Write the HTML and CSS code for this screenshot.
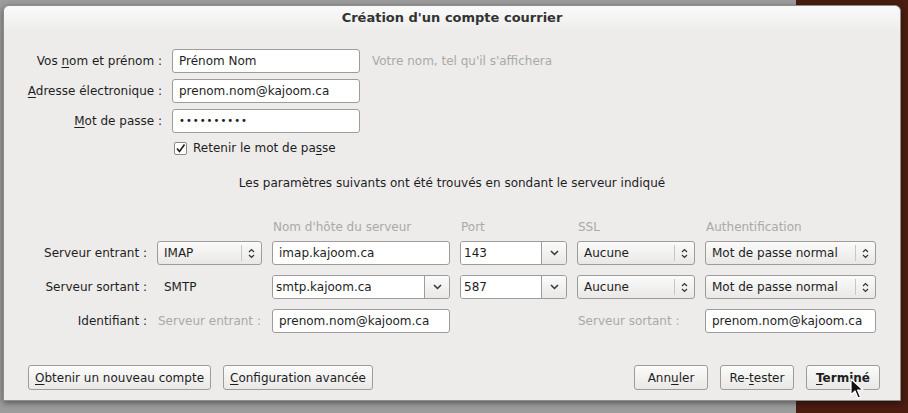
FILE: index.html
```html
<!DOCTYPE html>
<html lang="fr">
<head>
    <meta charset="UTF-8">
    <title>Création d'un compte courrier</title>
    <link rel="stylesheet" href="styles.css">
</head>
<body>
    <div class="dialog">
        <div class="titlebar">Création d'un compte courrier</div>

        <div class="identity">
            <label class="lbl">Vos <u>n</u>om et prénom :</label>
            <div class="entry">Prénom Nom</div>
            <span class="hint">Votre nom, tel qu'il s'affichera</span>

            <label class="lbl"><u>A</u>dresse électronique :</label>
            <div class="entry">prenom.nom@kajoom.ca</div>
            <span></span>

            <label class="lbl"><u>M</u>ot de passe :</label>
            <div class="entry dots">••••••••••</div>
            <span></span>

            <span></span>
            <label class="check">
                <span class="box">
                    <svg width="11" height="11" viewBox="0 0 11 11"><path d="M2 5.5 L4.5 8.5 L9.5 1.5" fill="none" stroke="#1a1a1a" stroke-width="1.6"/></svg>
                </span>
                <span>Retenir le mot de pa<u>s</u>se</span>
            </label>
            <span></span>
        </div>

        <p class="info">Les paramètres suivants ont été trouvés en sondant le serveur indiqué</p>

        <div class="servers">
            <span></span>
            <span></span>
            <span class="colhead">Nom d'hôte du serveur</span>
            <span class="colhead">Port</span>
            <span class="colhead">SSL</span>
            <span class="colhead">Authentification</span>

            <label class="lbl">Serveur entrant :</label>
            <div class="select">IMAP<span class="spin"></span></div>
            <div class="entry">imap.kajoom.ca</div>
            <div class="combo"><span>143</span><span class="drop"></span></div>
            <div class="select">Aucune<span class="spin"></span></div>
            <div class="select">Mot de passe normal<span class="spin"></span></div>

            <label class="lbl">Serveur sortant :</label>
            <span class="plain">SMTP</span>
            <div class="combo"><span>smtp.kajoom.ca</span><span class="drop"></span></div>
            <div class="combo"><span>587</span><span class="drop"></span></div>
            <div class="select">Aucune<span class="spin"></span></div>
            <div class="select">Mot de passe normal<span class="spin"></span></div>

            <label class="lbl">Identifiant :</label>
            <span class="sub">Serveur entrant :</span>
            <div class="entry">prenom.nom@kajoom.ca</div>
            <span></span>
            <span class="sub">Serveur sortant :</span>
            <div class="entry">prenom.nom@kajoom.ca</div>
        </div>

        <div class="actions">
            <button class="btn"><u>O</u>btenir un nouveau compte</button>
            <button class="btn"><u>C</u>onfiguration avancée</button>
            <span class="spacer"></span>
            <button class="btn wide">Ann<u>u</u>ler</button>
            <button class="btn wide">Re-<u>t</u>ester</button>
            <button class="btn wide default"><u>T</u>erminé</button>
        </div>

        <svg class="cursor" width="14" height="22" viewBox="0 0 14 22">
            <path d="M1 1 L1 17 L5 13 L8 20 L10.5 19 L7.5 12 L13 12 Z" fill="#111" stroke="#fff" stroke-width="1.2" stroke-linejoin="round"/>
        </svg>
    </div>
</body>
</html>
```

FILE: styles.css
```css
* {
    box-sizing: border-box;
}

body {
    margin: 0;
    height: 413px;
    overflow: hidden;
    font-family: 'DejaVu Sans', sans-serif;
    font-size: 12px;
    color: #1e1e1e;
    background: linear-gradient(to right, #9c9c9c 0, #9c9c9c 796px, #4a1d10 796px);
    padding: 5px 0 0 3px;
}

u {
    text-decoration: underline;
    text-underline-offset: 2px;
}

/* Dialog window */
.dialog {
    position: relative;
    width: 898px;
    height: 396px;
    background: #edeceb;
    border: 1px solid #8d8d8b;
    border-radius: 6px 6px 0 0;
    box-shadow: 0 2px 6px rgba(0, 0, 0, 0.45);
}

.titlebar {
    height: 26px;
    line-height: 24px;
    text-align: center;
    font-weight: bold;
    font-size: 13px;
    color: #333;
    border-radius: 6px 6px 0 0;
    background: linear-gradient(#fafafa, #edeceb);
}

/* Name / address / password */
.identity {
    display: grid;
    grid-template-columns: 158px 188px 1fr;
    column-gap: 10px;
    row-gap: 6px;
    align-items: center;
    margin-top: 17px;
}

.lbl {
    text-align: right;
    white-space: nowrap;
}

.hint {
    color: #a9a9a7;
    padding-left: 2px;
}

.entry {
    height: 24px;
    line-height: 22px;
    padding: 0 6px;
    background: #fff;
    border: 1px solid #9d9c9a;
    border-radius: 3px;
    white-space: nowrap;
    overflow: hidden;
}

.dots {
    letter-spacing: 1px;
    font-size: 10px;
}

.check {
    display: flex;
    align-items: center;
    gap: 6px;
    margin-top: 2px;
    padding-left: 2px;
}

.box {
    display: flex;
    align-items: center;
    justify-content: center;
    width: 13px;
    height: 13px;
    background: #fff;
    border: 1px solid #8a8a88;
    border-radius: 2px;
}

.info {
    margin: 21px 0 0;
    text-align: center;
}

/* Server settings table */
.servers {
    display: grid;
    grid-template-columns: 143px 105px 178px 107px 118px 171px;
    column-gap: 10px;
    row-gap: 10px;
    align-items: center;
    margin-top: 30px;
}

.colhead {
    color: #a9a9a7;
    padding-left: 1px;
    margin-bottom: -3px;
}

.plain {
    padding-left: 7px;
}

.sub {
    color: #a9a9a7;
    padding-left: 1px;
    white-space: nowrap;
}

.select {
    position: relative;
    height: 24px;
    line-height: 22px;
    padding: 0 6px;
    border: 1px solid #9d9c9a;
    border-radius: 3px;
    background: linear-gradient(#fbfbfb, #e9e8e6);
    white-space: nowrap;
}

.spin {
    position: absolute;
    right: 0;
    top: 3px;
    bottom: 3px;
    width: 20px;
    border-left: 1px solid #c8c7c5;
    background: url("data:image/svg+xml;utf8,<svg xmlns='http://www.w3.org/2000/svg' width='7' height='11'><path d='M1 4 L3.5 1.5 L6 4 M1 7 L3.5 9.5 L6 7' fill='none' stroke='%23333' stroke-width='1.2'/></svg>") center no-repeat;
}

.combo {
    display: flex;
    height: 24px;
    border: 1px solid #9d9c9a;
    border-radius: 3px;
    overflow: hidden;
}

.combo span:first-child {
    flex: 1;
    line-height: 22px;
    padding: 0 3px;
    background: #fff;
    border-right: 1px solid #9d9c9a;
}

.drop {
    width: 24px;
    background-image: url("data:image/svg+xml;utf8,<svg xmlns='http://www.w3.org/2000/svg' width='9' height='6'><path d='M1 1 L4.5 4.5 L8 1' fill='none' stroke='%23333' stroke-width='1.5'/></svg>"), linear-gradient(#fbfbfb, #e9e8e6);
    background-position: center, 0 0;
    background-repeat: no-repeat;
}

/* Bottom buttons */
.actions {
    display: flex;
    gap: 12px;
    margin-top: 32px;
    padding: 0 20px 0 24px;
}

.spacer {
    flex: 1;
}

.btn {
    height: 25px;
    padding: 0 6px;
    font: inherit;
    color: #1e1e1e;
    border: 1px solid #9d9c9a;
    border-radius: 3px;
    background: linear-gradient(#fbfbfb, #e9e8e6);
    white-space: nowrap;
}

.btn.wide {
    min-width: 74px;
}

.btn.default {
    font-weight: bold;
}

.cursor {
    position: absolute;
    left: 846px;
    top: 372px;
}
```
